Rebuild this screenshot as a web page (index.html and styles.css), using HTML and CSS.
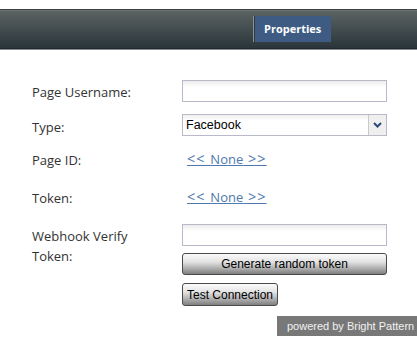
FILE: index.html
```html
<!DOCTYPE html>
<html>
<head>
<meta charset="utf-8">
<link rel="stylesheet" href="styles.css">
</head>
<body>
<div class="topbar">
  <div class="tab">Properties</div>
</div>
<div class="form">
  <div class="row r1">
    <div class="label">Page Username:</div>
    <div class="ctrl"><div class="input"></div></div>
  </div>
  <div class="row r2">
    <div class="label">Type:</div>
    <div class="ctrl">
      <div class="select">
        <span class="sel-text">Facebook</span>
        <span class="sel-btn"><svg width="9" height="6" viewBox="0 0 9 6"><path d="M1 1 L4.5 4.5 L8 1" fill="none" stroke="#2c4a78" stroke-width="2"/></svg></span>
      </div>
    </div>
  </div>
  <div class="row r3">
    <div class="label">Page ID:</div>
    <div class="ctrl"><a class="link" href="#"><span class="arr">&lt;&lt; </span>None<span class="arr"> &gt;&gt;</span></a></div>
  </div>
  <div class="row r4">
    <div class="label">Token:</div>
    <div class="ctrl"><a class="link" href="#"><span class="arr">&lt;&lt; </span>None<span class="arr"> &gt;&gt;</span></a></div>
  </div>
  <div class="row r5">
    <div class="label">Webhook Verify<br>Token:</div>
    <div class="ctrl stack">
      <div class="input"></div>
      <button class="btn wide">Generate random token</button>
      <button class="btn small">Test Connection</button>
    </div>
  </div>
</div>
<div class="footer">
  <div class="powered">powered by Bright Pattern</div>
</div>
</body>
</html>
```
FILE: styles.css
```css
html, body {
  margin: 0;
  padding: 0;
  background: #fff;
}
body {
  width: 417px;
  height: 337px;
  overflow: hidden;
  font-family: "Open Sans", "DejaVu Sans", sans-serif;
}
.topbar {
  margin-top: 9px;
  height: 38px;
  border-top: 1px solid #3b4142;
  border-bottom: 1px solid #1f2a2e;
  box-shadow: inset 0 1px 0 #6e7474, 0 1px 0 #8a8c8c;
  background: linear-gradient(#5c6363, #2a363b);
  display: flex;
  align-items: flex-start;
  padding-left: 253px;
}
.tab {
  margin-top: 6px;
  height: 26px;
  line-height: 25px;
  border-left: 1px solid #8b9090;
  box-shadow: inset 1px 0 0 #2e3a40;
  background: #3d5b83;
  color: #fff;
  font-family: "Open Sans", sans-serif;
  font-weight: bold;
  font-size: 11px;
  padding: 0 10px 0 10px;
}
.form {
  margin-top: 31px;
  padding-left: 32px;
}
.row {
  display: grid;
  grid-template-columns: 150px 205px;
}
.r1 { height: 34px; }
.r2 { height: 33px; }
.r3 { height: 38px; }
.r4 { height: 39px; }
.label {
  font-size: 13px;
  line-height: 20px;
  color: #333;
  padding-top: 2px;
}
.r2 .label { padding-top: 3px; }
.r3 .label, .r4 .label { padding-top: 3px; }
.input {
  width: 205px;
  height: 22px;
  box-sizing: border-box;
  border: 1px solid #b9b9c9;
  background: linear-gradient(#ececec, #fff 6px);
}
.select {
  width: 205px;
  height: 22px;
  box-sizing: border-box;
  border: 1px solid #b9b9c9;
  background: linear-gradient(#f0f0f0, #fff 6px);
  display: flex;
  align-items: center;
}
.sel-text {
  flex: 1;
  padding-left: 3px;
  font-family: "Liberation Sans", sans-serif;
  font-size: 12.5px;
  color: #000;
}
.sel-btn {
  width: 17px;
  height: 20px;
  border-left: 1px solid #c9c9c9;
  background: #efefef;
  display: flex;
  align-items: center;
  justify-content: center;
}
.link {
  display: inline-block;
  margin-left: 5px;
  font-size: 13px;
  line-height: 20px;
  color: #4f79ad;
  text-decoration: underline;
}
.arr {
  font-size: 14.5px;
  letter-spacing: 1px;
}
.stack {
  display: flex;
  flex-direction: column;
  align-items: flex-start;
}
.btn {
  font-family: "Liberation Sans", sans-serif;
  font-size: 12px;
  color: #000;
  border: 1px solid #4a4a4a;
  border-radius: 3px;
  background: linear-gradient(#fbfbfb, #e2e2e2 40%, #a9a9a9 75%, #7f7f7f);
  padding: 0;
  margin: 0;
  line-height: 18px;
}
.btn.wide {
  margin-top: 7px;
  width: 205px;
  height: 22px;
}
.btn.small {
  margin-top: 8px;
  width: 96px;
  height: 23px;
}
.footer {
  margin-top: 10px;
  display: flex;
  justify-content: flex-end;
}
.powered {
  width: 140px;
  height: 20px;
  box-sizing: border-box;
  background: #787878;
  color: #f2f2f2;
  font-family: "Liberation Sans", sans-serif;
  font-size: 11px;
  line-height: 20px;
  padding-left: 10px;
  white-space: nowrap;
}
```
